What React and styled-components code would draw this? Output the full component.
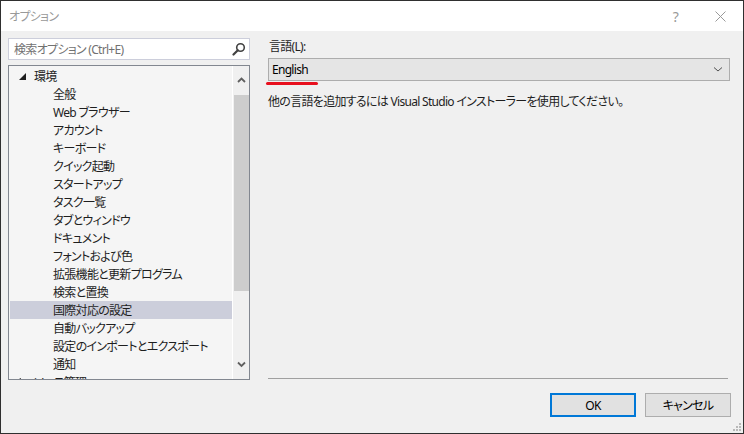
import React from 'react';
import styled, { createGlobalStyle } from 'styled-components';

const GlobalStyle = createGlobalStyle`
  html, body {
    margin: 0;
    padding: 0;
    background: #f0f0f0;
  }
  body {
    font-family: "Noto Sans", "Noto Sans CJK JP", sans-serif;
    font-size: 12px;
    letter-spacing: -0.7px;
    color: #1e1e1e;
    font-feature-settings: "palt";
  }
`;

const Window = styled.div`
  position: relative;
  width: 744px;
  height: 434px;
  box-sizing: border-box;
  border: 1px solid #2f2f2f;
  background: #f0f0f0;
  display: flex;
  flex-direction: column;
  overflow: hidden;
`;

const TitleBar = styled.div`
  height: 30px;
  flex: none;
  background: #ffffff;
  display: flex;
  align-items: center;
  padding-left: 8px;
  color: #999999;
  font-size: 12px;
`;

const TitleText = styled.div`
  flex: 1;
`;

const TitleButton = styled.div`
  width: 45px;
  height: 30px;
  display: flex;
  align-items: center;
  justify-content: center;
  color: #999999;
  font-size: ${({ $size }) => $size || 13}px;
`;

const Main = styled.div`
  flex: 1;
  display: flex;
  gap: 18px;
  padding: 7px 13px 0 7px;
  min-height: 0;
`;

const LeftColumn = styled.div`
  width: 242px;
  display: flex;
  flex-direction: column;
  gap: 5px;
`;

const SearchBox = styled.div`
  height: 22px;
  box-sizing: border-box;
  border: 1px solid #cccedb;
  background: #ffffff;
  display: flex;
  align-items: center;
  padding: 0 3px 0 5px;
  color: #717171;
`;

const SearchPlaceholder = styled.span`
  flex: 1;
`;

const TreeBox = styled.div`
  flex: 1;
  box-sizing: border-box;
  border: 1px solid #828790;
  background: #f5f5f5;
  display: flex;
  overflow: hidden;
`;

const TreeList = styled.div`
  flex: 1;
  padding: 1px 0 0 1px;
  overflow: hidden;
`;

const TreeRow = styled.div`
  height: 18px;
  display: flex;
  align-items: center;
  padding-left: ${({ $level }) => ($level ? 43 : 9)}px;
  background: ${({ $selected }) => ($selected ? '#cccedb' : 'transparent')};
  white-space: nowrap;
`;

const Expander = styled.span`
  width: 15px;
  display: flex;
  align-items: center;
`;

const ScrollBar = styled.div`
  width: 16px;
  border-left: 1px solid #ffffff;
  background: #f0f0f0;
  display: flex;
  flex-direction: column;
  align-items: center;
`;

const ScrollArrow = styled.div`
  height: 29px;
  width: 100%;
  display: flex;
  align-items: center;
  justify-content: center;
`;

const ScrollThumb = styled.div`
  width: 15px;
  height: 196px;
  background: #cdcdcd;
`;

const ScrollTrack = styled.div`
  flex: 1;
`;

const RightColumn = styled.div`
  flex: 1;
  display: flex;
  flex-direction: column;
  position: relative;
`;

const Label = styled.div`
  line-height: 18px;
  padding-left: 1px;
`;

const Select = styled.div`
  margin-top: 2px;
  height: 23px;
  box-sizing: border-box;
  border: 1px solid #adadad;
  background: #e5e5e5;
  display: flex;
  align-items: center;
  padding: 0 6px 0 3px;
  color: #000000;
`;

const SelectValue = styled.span`
  flex: 1;
`;

const Annotation = styled.div`
  position: absolute;
  left: -2px;
  top: 44px;
  width: 52px;
  height: 3px;
  border-radius: 2px;
  background: #e8101e;
`;

const Note = styled.div`
  margin-top: 13px;
  line-height: 16px;
`;

const Separator = styled.div`
  margin-top: auto;
  margin-bottom: 1px;
  height: 1px;
  width: 460px;
  background: #a0a0a0;
`;

const Footer = styled.div`
  height: 53px;
  flex: none;
  display: flex;
  justify-content: flex-end;
  align-items: flex-start;
  gap: 9px;
  padding: 13px 12px 0 0;
  box-sizing: border-box;
`;

const Button = styled.div`
  width: 86px;
  height: 24px;
  box-sizing: border-box;
  border: ${({ $primary }) => ($primary ? '2px solid #0078d7' : '1px solid #adadad')};
  background: #e1e1e1;
  display: flex;
  align-items: center;
  justify-content: center;
  color: #000000;
`;

const Grip = styled.svg`
  position: absolute;
  right: 1px;
  bottom: 1px;
`;

const items = [
  '全般',
  'Web ブラウザー',
  'アカウント',
  'キーボード',
  'クイック起動',
  'スタートアップ',
  'タスク一覧',
  'タブとウィンドウ',
  'ドキュメント',
  'フォントおよび色',
  '拡張機能と更新プログラム',
  '検索と置換',
  '国際対応の設定',
  '自動バックアップ',
  '設定のインポートとエクスポート',
  '通知',
];

const SearchIcon = () => (
  <svg width="14" height="14" viewBox="0 0 14 14">
    <circle cx="8.5" cy="5.5" r="3.8" fill="none" stroke="#424242" strokeWidth="1.6" />
    <path d="M5.8 8.2 L1.5 12.5" stroke="#424242" strokeWidth="2.2" strokeLinecap="round" />
  </svg>
);

const Chevron = ({ up, color = '#606060', w = 9, h = 5, stroke = 1.8 }) => (
  <svg width={w} height={h + 2} viewBox={`0 0 ${w} ${h + 2}`}>
    <path
      d={up ? `M1 ${h} L${w / 2} 1.5 L${w - 1} ${h}` : `M1 1.5 L${w / 2} ${h} L${w - 1} 1.5`}
      fill="none"
      stroke={color}
      strokeWidth={stroke}
    />
  </svg>
);

export default function App() {
  return (
    <>
      <GlobalStyle />
      <Window>
        <TitleBar>
          <TitleText>オプション</TitleText>
          <TitleButton $size={14}>?</TitleButton>
          <TitleButton>
            <svg width="11" height="11" viewBox="0 0 11 11">
              <path d="M0.5 0.5 L10.5 10.5 M10.5 0.5 L0.5 10.5" stroke="#999" strokeWidth="1" />
            </svg>
          </TitleButton>
        </TitleBar>
        <Main>
          <LeftColumn>
            <SearchBox>
              <SearchPlaceholder>検索オプション (Ctrl+E)</SearchPlaceholder>
              <SearchIcon />
            </SearchBox>
            <TreeBox>
              <TreeList>
                <TreeRow>
                  <Expander>
                    <svg width="7" height="7" viewBox="0 0 7 7">
                      <polygon points="7,0 7,7 0,7" fill="#1e1e1e" />
                    </svg>
                  </Expander>
                  環境
                </TreeRow>
                {items.map((item) => (
                  <TreeRow key={item} $level={1} $selected={item === '国際対応の設定'}>
                    {item}
                  </TreeRow>
                ))}
                <TreeRow>
                  <Expander>
                    <svg width="7" height="9" viewBox="0 0 7 9">
                      <polygon points="1,0.5 6,4.5 1,8.5" fill="none" stroke="#1e1e1e" />
                    </svg>
                  </Expander>
                  ソース管理
                </TreeRow>
              </TreeList>
              <ScrollBar>
                <ScrollArrow>
                  <Chevron up />
                </ScrollArrow>
                <ScrollThumb />
                <ScrollTrack />
                <ScrollArrow>
                  <Chevron />
                </ScrollArrow>
              </ScrollBar>
            </TreeBox>
          </LeftColumn>
          <RightColumn>
            <Label>言語(L):</Label>
            <Select>
              <SelectValue>English</SelectValue>
              <Chevron w={10} h={5} stroke={1} color="#505050" />
            </Select>
            <Annotation />
            <Note>他の言語を追加するには Visual Studio インストーラーを使用してください。</Note>
            <Separator />
          </RightColumn>
        </Main>
        <Footer>
          <Button $primary>OK</Button>
          <Button>キャンセル</Button>
        </Footer>
        <Grip width="10" height="10" viewBox="0 0 10 10">
          {[
            [8, 2],
            [8, 5],
            [8, 8],
            [5, 5],
            [5, 8],
            [2, 8],
          ].map(([x, y]) => (
            <rect key={`${x}-${y}`} x={x - 1} y={y - 1} width="2" height="2" fill="#b8b8b8" />
          ))}
        </Grip>
      </Window>
    </>
  );
}
